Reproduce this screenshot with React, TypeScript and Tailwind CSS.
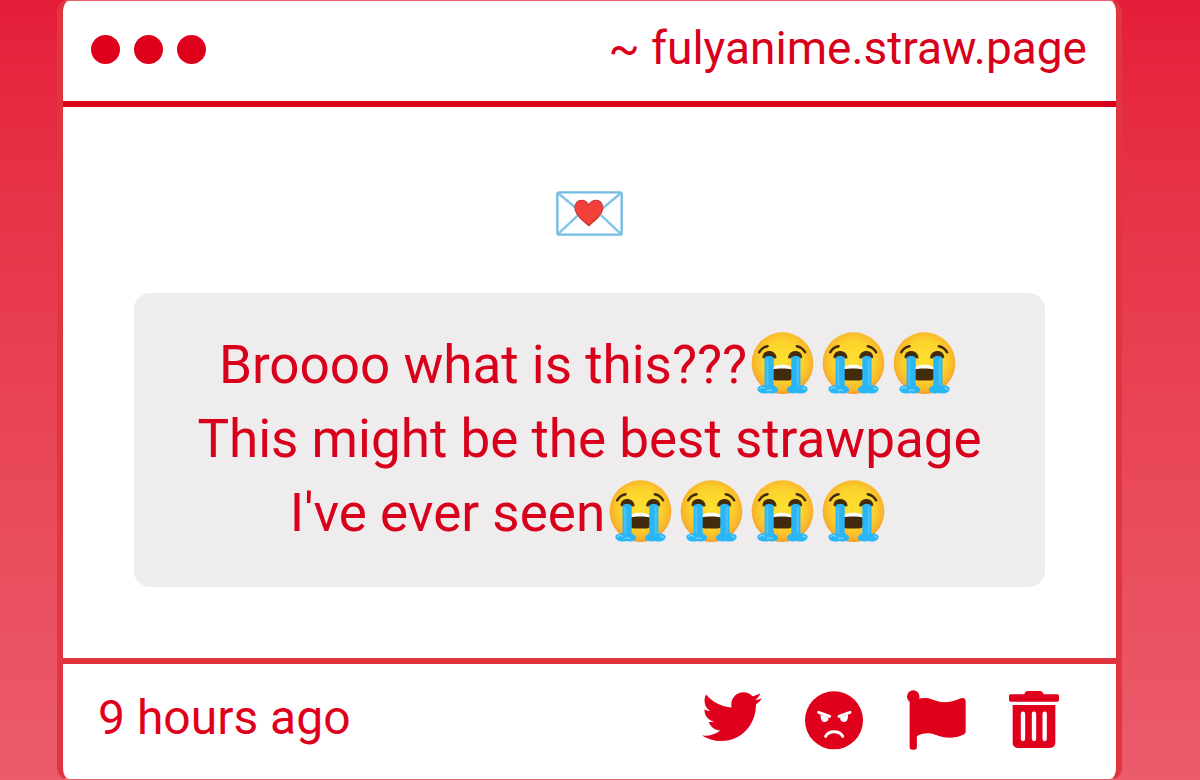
import type { ReactNode } from "react";

function LoveLetter() {
  return (
    <svg viewBox="0 0 200 134" className="h-[45px] w-[67px]" role="img" aria-label="Love letter">
      <rect x="4" y="4" width="192" height="126" rx="5" fill="#fdfeff" stroke="#74bbe4" strokeWidth="7" />
      <path d="M5 5 76 64M195 5 124 64M5 129 66 72M195 129 134 72" fill="none" stroke="#82c4e8" strokeWidth="7" />
      <path
        d="M98 106C86 94 55 74 55 50c0-14 9-24 22-24 9 0 17 5 21 13 4-8 12-13 21-13 13 0 22 10 22 24 0 24-31 44-43 56Z"
        fill="#b8342f"
      />
      <path
        d="M98 101C86 90 57 70 57 49c0-12 8-21 20-21 10 0 17 6 21 15 4-9 11-15 21-15 12 0 20 9 20 21 0 21-29 41-41 52Z"
        fill="#f2403a"
      />
    </svg>
  );
}

function Sob() {
  return (
    <svg viewBox="28 20 186 186" className="mx-1 inline-block size-[63px] align-[-12px]" role="img" aria-label="Loudly crying face">
      <defs>
        <radialGradient id="sob-face" cx="50%" cy="46%" r="54%">
          <stop offset="0" stopColor="#fde030" />
          <stop offset="0.6" stopColor="#fcd32c" />
          <stop offset="0.88" stopColor="#f8b62b" />
          <stop offset="1" stopColor="#f19a2c" />
        </radialGradient>
      </defs>
      <circle cx="121" cy="112" r="91" fill="url(#sob-face)" />
      <path d="M52 80c5-9 13-16 25-18M188 80c-5-9-13-16-25-18" fill="none" stroke="#422b0d" strokeWidth="7" strokeLinecap="round" />
      <path d="M91 128c4-12 54-12 58 0v28c0 5-5 7-10 7h-38c-5 0-10-2-10-7Z" fill="#422b0d" />
      <path d="M91 127c3-14 55-14 58 0v4c-14-4-44-4-58 0Z" fill="#fff" />
      <path d="M63 95c3-23 35-23 39 1l-5 1c-8-9-22-9-30 0ZM178 95c-3-23-35-23-39 1l5 1c8-9 22-9 30 0Z" fill="#422b0d" stroke="#422b0d" strokeWidth="3" strokeLinejoin="round" />
      <path d="M68 95q13-8 27 0v82c6 4 14 8 13 14-2 10-18 12-29 9-14 4-31 0-32-11-1-8 10-12 21-12Z" fill="#29b6f6" />
      <path d="M174 95q-13-8-27 0v82c-6 4-14 8-13 14 2 10 18 12 29 9 14 4 31 0 32-11 1-8-10-12-21-12Z" fill="#29b6f6" />
      <path d="M76 99v80M166 99v80" stroke="#4cc1f7" strokeWidth="6" fill="none" />
      <path d="M54 187c4-4 10-4 14-1M76 193c5-3 9-3 13 0M180 185c4 0 7 2 8 5" stroke="#81d4fa" strokeWidth="4" strokeLinecap="round" fill="none" />
    </svg>
  );
}

function TwitterIcon() {
  return (
    <svg viewBox="0 28 512 512" className="size-[60px]" fill="currentColor" aria-hidden="true">
      <path d="M459.37 151.716c.325 4.548.325 9.097.325 13.645 0 138.72-105.583 298.558-298.558 298.558-59.452 0-114.68-17.219-161.137-47.106 8.447.974 16.568 1.299 25.34 1.299 49.055 0 94.213-16.568 130.274-44.832-46.132-.975-84.792-31.188-98.112-72.772 6.498.974 12.995 1.624 19.818 1.624 9.421 0 18.843-1.3 27.614-3.573-48.081-9.747-84.143-51.98-84.143-102.985v-1.299c13.969 7.797 30.214 12.67 47.431 13.319-28.264-18.843-46.781-51.005-46.781-87.391 0-19.492 5.197-37.36 14.294-52.954 51.655 63.675 129.3 105.258 216.365 109.807-1.624-7.797-2.599-15.918-2.599-24.04 0-57.828 46.782-104.934 104.934-104.934 30.213 0 57.502 12.67 76.67 33.137 23.715-4.548 46.456-13.32 66.599-25.34-7.798 24.366-24.366 44.833-46.132 57.827 21.117-2.273 41.584-8.122 60.426-16.243-14.292 20.791-32.161 39.308-52.628 54.253z" />
    </svg>
  );
}

function AngryIcon() {
  return (
    <svg viewBox="342 30 180 180" className="size-[60px]" aria-hidden="true">
      <circle cx="432" cy="121" r="87" fill="currentColor" />
      <path d="m386 97 33 12M480 97l-33 12" stroke="#fff" strokeWidth="9" strokeLinecap="round" />
      <path d="M392 104c-1 14 4 22 12 22s13-6 11-14ZM474 104c1 14-4 22-12 22s-13-6-11-14Z" fill="#fff" />
      <path d="M407 169c10-18 41-18 51 0" fill="none" stroke="#fff" strokeWidth="9" strokeLinecap="round" />
    </svg>
  );
}

function FlagIcon() {
  return (
    <svg viewBox="49 30 182 182" className="size-[60px]" fill="currentColor" aria-hidden="true">
      <circle cx="71" cy="50" r="19" />
      <path d="M60 55h22v148q0 8-8 8h-6q-8 0-8-8Z" />
      <path d="M80 61c10-7 30-9 48-2 30 11 52 11 88-4 8-3 14 1 14 9v91c0 5-2 8-6 10-30 14-56 12-86 1-21-7-38-6-58 5Z" />
    </svg>
  );
}

function TrashIcon() {
  return (
    <svg viewBox="354 33 156 180" className="h-[60px] w-[52px]" aria-hidden="true">
      <path d="M362 46h41q3-10 10-10h37q7 0 11 10h41q5 0 5 5v12q0 5-5 5H362q-5 0-5-5V51q0-5 5-5Z" fill="currentColor" />
      <path d="M368 78h128v112q0 17-17 17h-94q-17 0-17-17Z" fill="currentColor" />
      <path d="M399 104v76M432 104v76M464 104v76" stroke="#fff" strokeWidth="13" strokeLinecap="round" />
    </svg>
  );
}

function IconButton({ label, children }: { label: string; children: ReactNode }) {
  return (
    <button type="button" aria-label={label} className="cursor-pointer">
      {children}
    </button>
  );
}

export default function App() {
  return (
    <div className="flex min-h-screen bg-linear-to-b from-[#e51d39] to-[#eb5b6c] pr-[78px] pl-[57px] font-['Roboto','Liberation_Sans',sans-serif] text-[#d9001b]">
      <article className="flex flex-1 flex-col rounded-xl border-x-6 border-y border-x-[#e0363f] border-y-[#e8606c] bg-white">
        <header className="flex h-[106px] items-center justify-between border-b-6 border-[#d9001b] pr-[29px] pb-1 pl-7">
          <div className="flex gap-[14px]" aria-hidden="true">
            <span className="size-[29px] rounded-full bg-[#df001b]" />
            <span className="size-[29px] rounded-full bg-[#df001b]" />
            <span className="size-[29px] rounded-full bg-[#df001b]" />
          </div>
          <a href="https://fulyanime.straw.page" className="pb-0.5 text-[46px] leading-none">
            ~ fulyanime.straw.page
          </a>
        </header>

        <main className="flex flex-1 flex-col items-center px-[71px] pt-[84px] pb-[71px]">
          <LoveLetter />
          <p className="mt-[57px] w-full flex-1 rounded-2xl bg-[#eeeced] py-[35px] text-center text-[53px] leading-[74px]">
            Broooo what is this???
            <Sob />
            <Sob />
            <Sob />
            <br />
            This might be the best strawpage
            <br />
            I've ever seen
            <Sob />
            <Sob />
            <Sob />
            <Sob />
          </p>
        </main>

        <footer className="flex h-[121px] items-center justify-between border-t-6 border-[#e0353f] pr-14 pb-1 pl-[35px] text-[#df001b]">
          <time className="pb-1 text-[48px] leading-none">9 hours ago</time>
          <div className="flex gap-[42px]">
            <IconButton label="Share on Twitter">
              <TwitterIcon />
            </IconButton>
            <IconButton label="Block sender">
              <AngryIcon />
            </IconButton>
            <IconButton label="Report">
              <FlagIcon />
            </IconButton>
            <IconButton label="Delete">
              <TrashIcon />
            </IconButton>
          </div>
        </footer>
      </article>
    </div>
  );
}
